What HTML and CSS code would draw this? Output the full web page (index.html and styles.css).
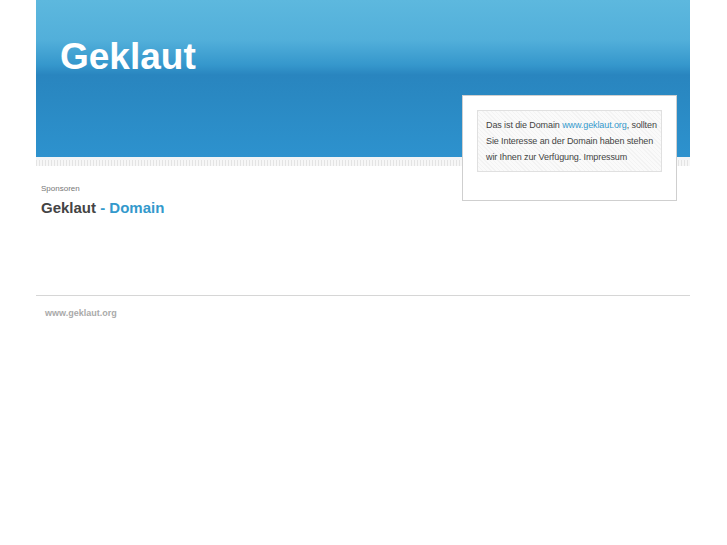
FILE: index.html
```html
<!doctype html>
<html lang="de">
<head>
	<meta charset="UTF-8">
	<title>Geklaut</title>
	<link rel="stylesheet" href="styles.css">
</head>
<body>
	<div class="page">
		<div class="header">
			<h1>Geklaut</h1>
		</div>
		<div class="strip"></div>
		<div class="infobox">
			<div class="info">
				Das ist die Domain <a href="#">www.geklaut.org</a>, sollten
				Sie Interesse an der Domain haben stehen
				wir Ihnen zur Verfügung. Impressum
			</div>
		</div>
		<div class="content">
			<div class="sponsor">Sponsoren</div>
			<h2>Geklaut <span>- Domain</span></h2>
		</div>
		<div class="footer">www.geklaut.org</div>
	</div>
</body>
</html>
```
FILE: styles.css
```css
body{margin:0;
     background:#fff;
     font-family:"Liberation Sans", Arial, sans-serif;}
.page{width:654px;
      margin:0 auto;
      position:relative;
      left:-0.5px;}
.header{height:157px;
        box-sizing:border-box;
        padding:37px 0 0 24px;
        background:linear-gradient(#5db8de 0px,#52afda 40px,#3597cc 65px,#2985bf 75px,#2a89c3 100px,#2d92ce 157px);}
h1{margin:0;
   color:#fff;
   font-size:37px;
   font-weight:bold;
   line-height:40px;}
.strip{height:9px;
       border-top:3px solid #f1f4f6;
       box-sizing:border-box;
       background:repeating-linear-gradient(90deg,#e4e4e4 0 1px,#f7f7f7 1px 3px);}
.infobox{position:absolute;
         left:426px;
         top:95px;
         width:215px;
         height:106px;
         box-sizing:border-box;
         background:#fff;
         border:1px solid #cfcfcf;
         padding:14px 14px 0 14px;}
.info{border:1px solid #e0e0e0;
      background:repeating-linear-gradient(45deg,#f3f3f3 0 1px,#fafafa 1px 3px);
      padding:6px 0 5px 8px;
      height:62px;
      box-sizing:border-box;
      font-size:9px;
      line-height:16px;
      color:#444;
      letter-spacing:-0.1px;}
.info a{color:#3399cc;
        text-decoration:none;}
.content{padding:17px 5px 0;
         height:130px;
         box-sizing:border-box;
         border-bottom:1px solid #d6d6d6;}
.sponsor{font-size:8px;
         color:#777;
         line-height:12px;}
h2{margin:4px 0 0;
   font-size:15px;
   line-height:17px;
   color:#444;}
h2 span{color:#3399cc;}
.footer{padding:12px 9px;
        font-size:9px;
        font-weight:bold;
        color:#aaa;}
```
